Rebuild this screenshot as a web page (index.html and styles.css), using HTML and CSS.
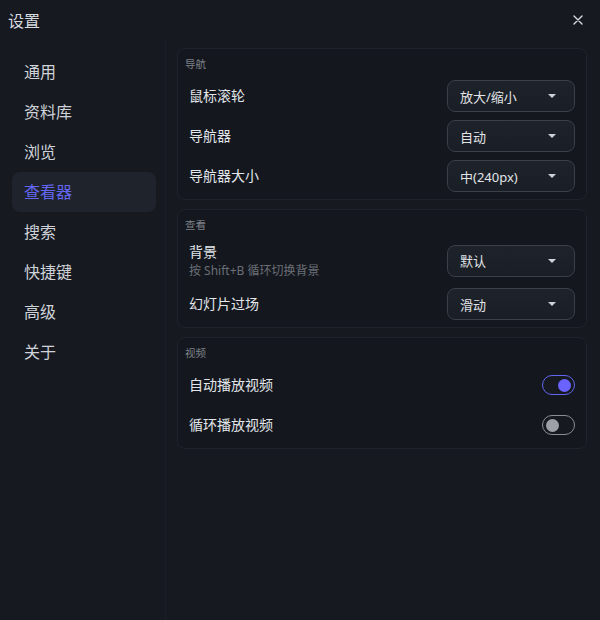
FILE: index.html
```html
<!DOCTYPE html>
<html lang="zh-CN">
<head>
    <meta charset="UTF-8">
    <meta name="viewport" content="width=device-width, initial-scale=1.0">
    <title>设置</title>
    <link rel="stylesheet" href="styles.css">
</head>
<body>

<div class="header">
    <span class="title">设置</span>
    <button class="close-btn" title="关闭">
        <svg width="10" height="10" viewBox="0 0 10 10"><path d="M1 1L9 9M9 1L1 9" stroke="#d6d9de" stroke-width="1.4" stroke-linecap="round"/></svg>
    </button>
</div>

<div class="main">
    <div class="sidebar">
        <div class="nav-item">通用</div>
        <div class="nav-item">资料库</div>
        <div class="nav-item">浏览</div>
        <div class="nav-item active">查看器</div>
        <div class="nav-item">搜索</div>
        <div class="nav-item">快捷键</div>
        <div class="nav-item">高级</div>
        <div class="nav-item">关于</div>
    </div>

    <div class="content">
        <div class="card">
            <div class="card-title">导航</div>
            <div class="rows">
                <div class="row">
                    <span class="label">鼠标滚轮</span>
                    <div class="select">放大/缩小<span class="caret"></span></div>
                </div>
                <div class="row">
                    <span class="label">导航器</span>
                    <div class="select">自动<span class="caret"></span></div>
                </div>
                <div class="row">
                    <span class="label">导航器大小</span>
                    <div class="select">中(240px)<span class="caret"></span></div>
                </div>
            </div>
        </div>

        <div class="card">
            <div class="card-title">查看</div>
            <div class="rows">
                <div class="row tall">
                    <div>
                        <div class="label">背景</div>
                        <div class="hint">按 Shift+B 循环切换背景</div>
                    </div>
                    <div class="select">默认<span class="caret"></span></div>
                </div>
                <div class="row">
                    <span class="label">幻灯片过场</span>
                    <div class="select">滑动<span class="caret"></span></div>
                </div>
            </div>
        </div>

        <div class="card">
            <div class="card-title">视频</div>
            <div class="rows">
                <div class="row">
                    <span class="label">自动播放视频</span>
                    <span class="switch on"><span class="knob"></span></span>
                </div>
                <div class="row">
                    <span class="label">循环播放视频</span>
                    <span class="switch"><span class="knob"></span></span>
                </div>
            </div>
        </div>
    </div>
</div>

</body>
</html>
```

FILE: styles.css
```css
body {
    margin: 0;
    height: 620px;
    background: #161920;
    color: #dfe3e8;
    font-family: "Noto Sans", "Noto Sans CJK SC", sans-serif;
    display: flex;
    flex-direction: column;
    overflow: hidden;
}
.header {
    height: 40px;
    display: flex;
    align-items: center;
    justify-content: space-between;
    padding: 0 13px 0 8px;
}
.title {
    font-size: 16px;
    color: #d8dce1;
}
.close-btn {
    width: 18px;
    height: 18px;
    padding: 0;
    border: none;
    background: none;
    display: flex;
    align-items: center;
    justify-content: center;
    cursor: pointer;
}
.main {
    flex: 1;
    display: flex;
}
.sidebar {
    width: 144px;
    padding: 12px 9px 0 12px;
    border-right: 1px solid #1b1e26;
    display: flex;
    flex-direction: column;
}
.nav-item {
    height: 40px;
    line-height: 40px;
    padding-left: 12px;
    border-radius: 8px;
    font-size: 16px;
    color: #cfd3d9;
}
.nav-item.active {
    background: #1f232b;
    color: #6366f1;
}
.content {
    flex: 1;
    padding: 8px 13px 0 11px;
    display: flex;
    flex-direction: column;
    gap: 9px;
}
.card {
    border: 1px solid #1f232b;
    border-radius: 8px;
    background: #14171d;
    padding: 7px;
}
.card-title {
    font-size: 10.5px;
    line-height: 16px;
    color: #7c8088;
    margin-bottom: 8px;
}
.rows {
    display: flex;
    flex-direction: column;
    gap: 8px;
    padding: 0 4px;
}
.row {
    height: 32px;
    display: flex;
    align-items: center;
    justify-content: space-between;
}
.row.tall {
    height: 39px;
}
.label {
    font-size: 14px;
    line-height: 20px;
    color: #e2e6eb;
}
.hint {
    font-size: 12px;
    line-height: 18px;
    color: #6b6f77;
}
.select {
    width: 128px;
    height: 32px;
    box-sizing: border-box;
    border: 1px solid #3a3f48;
    border-radius: 8px;
    background: linear-gradient(#1e222a, #1a1e25);
    display: flex;
    align-items: center;
    justify-content: space-between;
    padding: 0 18px 0 12px;
    font-size: 13px;
    color: #e1e4e8;
}
.caret {
    width: 0;
    height: 0;
    border-left: 4px solid transparent;
    border-right: 4px solid transparent;
    border-top: 4px solid #cfd2d7;
}
.switch {
    width: 33px;
    height: 20px;
    box-sizing: border-box;
    border: 1.5px solid #8b8e95;
    border-radius: 10px;
    background: #16191f;
    display: flex;
    align-items: center;
    padding: 0 3px;
}
.switch .knob {
    width: 13px;
    height: 13px;
    border-radius: 50%;
    background: #9da0a7;
}
.switch.on {
    border-color: #6366f1;
    justify-content: flex-end;
}
.switch.on .knob {
    background: #6b63ff;
}
```
